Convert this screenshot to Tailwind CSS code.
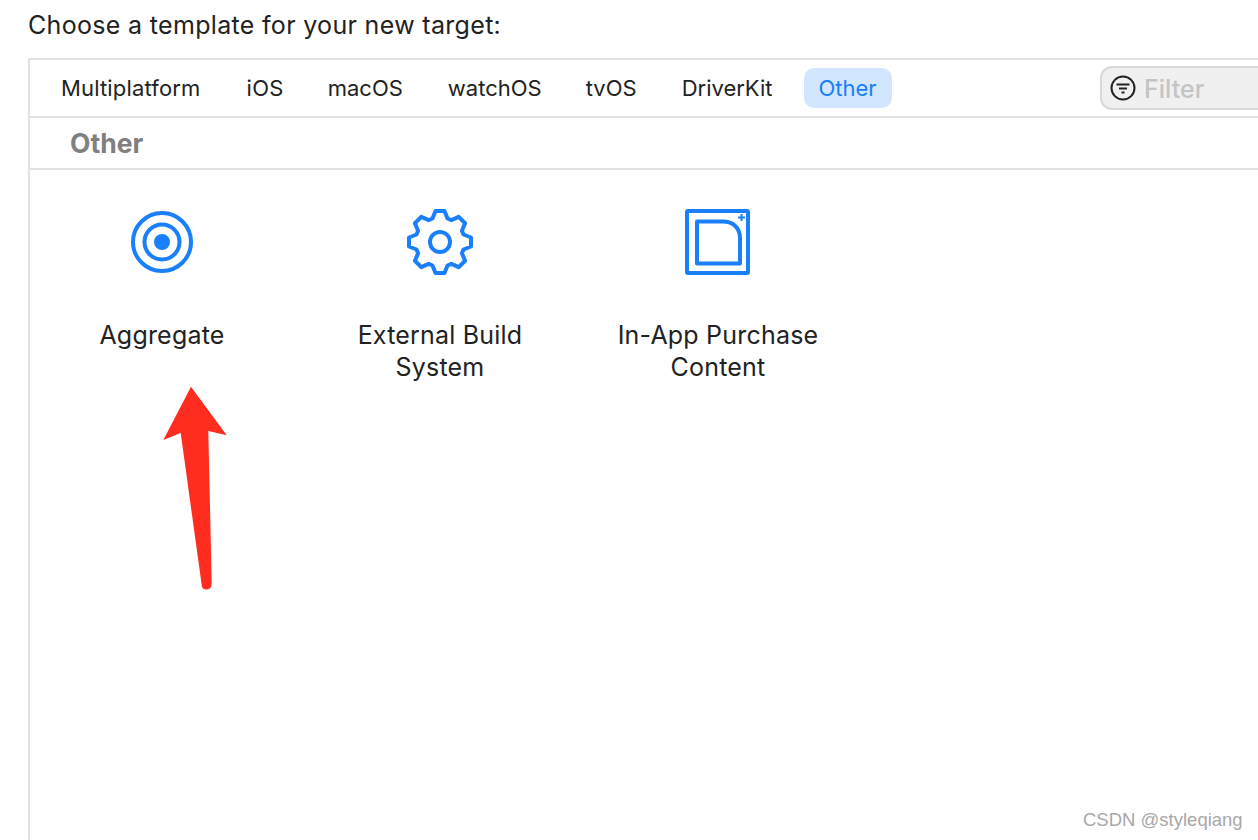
<!DOCTYPE html>
<html lang="en">
<head>
    <meta charset="UTF-8">
    <title>Choose a template</title>
    <script src="https://cdn.jsdelivr.net/npm/@tailwindcss/browser@4"></script>
</head>
<body class="relative w-[1258px] h-[840px] overflow-hidden bg-white font-['Inter',sans-serif] text-[#222222]">
    <h1 class="h-[58px] pl-[28px] pt-[8px] text-[25px] leading-[34px] tracking-[0.32px] font-normal">Choose a template for your new target:</h1>

    <div class="ml-[28px] h-[782px] border-l-2 border-t-2 border-[#e3e3e3]">
        <!-- platform tabs -->
        <div class="relative flex items-center h-[58px] pl-[17px] border-b-2 border-[#e3e3e3] text-[22px]">
            <div class="px-[14px] tracking-[0.16px]">Multiplatform</div>
            <div class="ml-[18px] px-[14px] tracking-[0.3px]">iOS</div>
            <div class="ml-[16px] px-[14px]">macOS</div>
            <div class="ml-[17px] px-[14px]">watchOS</div>
            <div class="ml-[16px] px-[14px]">tvOS</div>
            <div class="ml-[17px] px-[14px]">DriverKit</div>
            <div class="ml-[17px] flex items-center justify-center w-[88px] h-[40px] rounded-[10px] bg-[#d2e6ff] text-[#1a7ffb]">Other</div>
            <div class="absolute left-[1070px] top-[6px] flex items-center w-[170px] h-[44px] pl-[8px] rounded-l-[12px] border-2 border-r-0 border-[#d8d8d8] bg-[#f0f0f0]">
                <svg width="26" height="26" viewBox="0 0 26 26" fill="none" stroke="#222222" stroke-width="2">
                    <circle cx="13" cy="13" r="11.5"/>
                    <path d="M6.5 9.5h13M9 13.5h8M11.5 17.5h3"/>
                </svg>
                <span class="ml-[8px] mt-[3px] text-[25px] font-medium text-[#c4c4c4]">Filter</span>
            </div>
        </div>

        <div class="flex items-center h-[50px] pt-[1px] pl-[40px] text-[26.500px] font-bold text-[#808080]">Other</div>
        <div class="h-[2px] bg-[#e3e3e3]"></div>

        <!-- templates -->
        <div class="flex ml-[-7px] pt-[39px] text-[25px] leading-[32px] tracking-[0.2px] text-center">
            <div class="w-[278px] flex flex-col items-center">
                <svg width="66" height="66" viewBox="-33 -33 66 66" fill="none" stroke="#1a7ffb" stroke-width="4">
                    <circle r="29"/>
                    <circle r="17.5"/>
                    <circle r="8" fill="#1a7ffb" stroke="none"/>
                </svg>
                <div class="mt-[44px]">Aggregate</div>
            </div>
            <div class="w-[278px] flex flex-col items-center">
                <svg width="66" height="66" viewBox="-33 -33 66 66" fill="none" stroke="#1a7ffb" stroke-width="4" stroke-linejoin="round">
                    <path d="M-7.5-23.5L-4.5-31L4.5-31L7.5-23.5L11.31-21.92L18.74-25.1L25.1-18.74L21.92-11.31L23.5-7.5L31-4.5L31 4.5L23.5 7.5L21.92 11.31L25.1 18.74L18.74 25.1L11.31 21.92L7.5 23.5L4.5 31L-4.5 31L-7.5 23.5L-11.31 21.92L-18.74 25.1L-25.1 18.74L-21.92 11.31L-23.5 7.5L-31 4.5L-31-4.5L-23.5-7.5L-21.92-11.31L-25.1-18.74L-18.74-25.1L-11.31-21.92Z"/>
                    <circle r="10"/>
                </svg>
                <div class="mt-[44px] w-[200px]">External Build System</div>
            </div>
            <div class="w-[278px] flex flex-col items-center">
                <svg width="66" height="66" viewBox="0 0 66 66" fill="none" stroke="#1a7ffb" stroke-width="4" stroke-linejoin="round">
                    <rect x="2" y="2" width="61" height="62" rx="1"/>
                    <path d="M12 12.5H38C48 12.500 55 19 55 29V54.500H12Z"/>
                    <path d="M53 8.500h7M56.500 5v7" stroke-width="2"/>
                </svg>
                <div class="mt-[44px] w-[220px]">In-App Purchase Content</div>
            </div>
        </div>
    </div>

    <!-- annotation arrow -->
    <svg class="absolute left-0 top-0" width="1258" height="840" fill="none">
        <path d="M191 386.700L226.700 435.300L208.300 431L211.700 583Q211.700 589.500 206.500 589.500Q202 589.500 201.700 585L180.700 433L163.300 440Z" fill="#ff2d20"/>
    </svg>

    <div class="absolute left-[1083px] top-[808px] text-[18.500px] leading-[24px] font-['Liberation_Sans',sans-serif] text-[#a8a8a8]">CSDN @styleqiang</div>
</body>
</html>
